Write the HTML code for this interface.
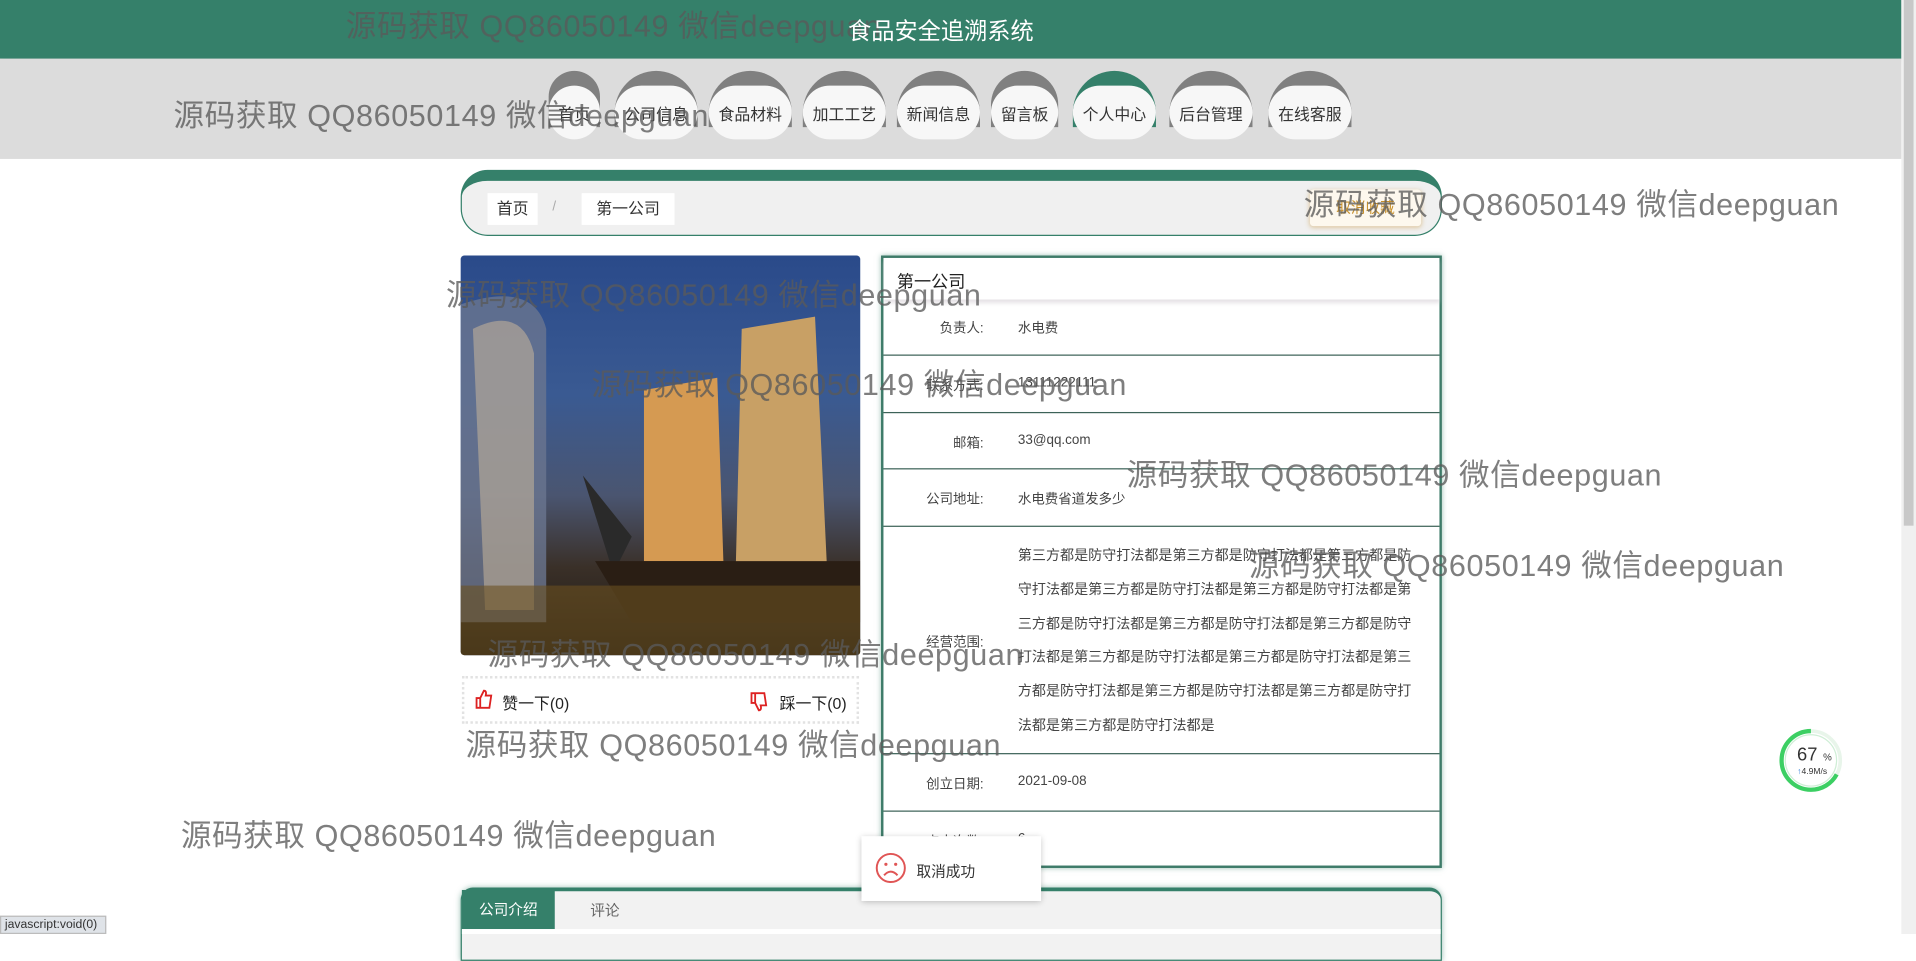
<!DOCTYPE html>
<html><head><meta charset="utf-8">
<style>
*{margin:0;padding:0;box-sizing:border-box}
html,body{width:1916px;height:934px;overflow:hidden;background:#fff;font-family:"Liberation Sans","Noto Sans CJK SC",sans-serif}
#s{position:absolute;left:0;top:0;width:1568px;height:764px;transform:scale(1.22194,1.2225);transform-origin:0 0}
.a{position:absolute}
.hdr{left:0;top:0;width:1556px;height:48px;background:#35806a;box-shadow:0 2px 4px rgba(0,0,0,.3)}
.title{left:0;width:1540px;top:11px;text-align:center;color:#fff;font-size:19px;z-index:5}
.nav{left:0;top:48px;width:1556px;height:82px;background:#dcdcdc}
.ni{position:absolute;top:58px;height:56px}
.ni .t{position:absolute;left:0;right:0;top:0;height:46px;border-radius:34px 34px 0 0;background:#808080}
.ni .w{position:absolute;left:0;right:0;top:12px;bottom:0;border-radius:24px;background:#f7f7f7;font-size:13px;color:#333;text-align:center;line-height:48px}
.bc{left:377px;top:139px;width:803px;height:54px;border:1px solid #35806a;border-top:9px solid #35806a;border-radius:22px;background:#f0f0f0}
.bi{position:absolute;top:158px;height:26px;background:#fff;font-size:13px;color:#333;line-height:26px;text-align:center}
.info{left:721px;top:209px;width:459px;height:501px;border:2px solid #3e7b69;box-shadow:0 0 4px rgba(53,128,106,.5);background:#fff}
.row{position:absolute;left:0;right:0;border-top:1px solid #3d6358;font-size:11px;color:#444}
.row .l{position:absolute;right:373px;text-align:right}
.row .v{position:absolute;left:110px}
.wm{position:absolute;font-size:25px;color:rgba(90,90,90,.78);white-space:nowrap;letter-spacing:0.5px}
</style></head><body><div id="s">
<div class="a hdr"></div>
<div class="a nav"></div>
<div class="ni" style="left:449px;width:42px"><div class="t"></div><div class="w">首页</div></div>
<div class="ni" style="left:503px;width:68px"><div class="t"></div><div class="w">公司信息</div></div>
<div class="ni" style="left:580px;width:68px"><div class="t"></div><div class="w">食品材料</div></div>
<div class="ni" style="left:657px;width:68px"><div class="t"></div><div class="w">加工工艺</div></div>
<div class="ni" style="left:734px;width:68px"><div class="t"></div><div class="w">新闻信息</div></div>
<div class="ni" style="left:811px;width:55px"><div class="t"></div><div class="w">留言板</div></div>
<div class="ni" style="left:878px;width:68px"><div class="t" style="background:#35806a"></div><div class="w">个人中心</div></div>
<div class="ni" style="left:957px;width:68px"><div class="t"></div><div class="w">后台管理</div></div>
<div class="ni" style="left:1038px;width:68px"><div class="t"></div><div class="w">在线客服</div></div>

<div class="a bc"></div>
<div class="bi" style="left:399px;width:41px">首页</div>
<div class="a" style="left:452px;top:163px;font-size:11px;color:#aaa">/</div>
<div class="bi" style="left:476px;width:76px">第一公司</div>
<div class="a" style="left:1072px;top:155px;width:91px;height:30px;background:#fdf8ee;border-radius:3px;box-shadow:0 1px 4px rgba(200,150,60,.5);font-size:12px;color:#c8902a;line-height:30px;text-align:center">取消收藏</div>

<div class="a" style="left:377px;top:209px;width:327px;height:327px;border-radius:3px;overflow:hidden;background:linear-gradient(180deg,#2a4a8a 0%,#3a5a92 35%,#4a5570 60%,#3a3028 78%,#1a1612 100%)">
<svg width="327" height="327" style="position:absolute;left:0;top:0">
<path d="M0 40 Q60 20 70 60 L70 300 L0 300Z" fill="#6a7590" opacity=".8"/>
<path d="M10 60 Q50 40 60 80 L60 290 L20 290Z" fill="#c9b79a" opacity=".55"/>
<path d="M150 110 L210 100 L215 250 L150 250Z" fill="#d59a52"/>
<path d="M230 60 L290 50 L300 260 L225 260Z" fill="#c8a065"/>
<path d="M100 180 L140 230 L125 260Z" fill="#2a2a2a"/>
<path d="M110 250 L327 250 L327 300 L140 300Z" fill="#2a1e14"/>
<rect x="0" y="270" width="327" height="57" fill="#6a5020" opacity=".6"/>
</svg></div>
<div class="a" style="left:378px;top:553px;width:325px;height:39px;border:2px dotted #e2e2e2"></div>
<svg class="a" style="left:388px;top:564px" width="16" height="16" viewBox="0 0 16 16"><path d="M2 7h3v8H2zM5 7l3-6c2 0 2 2 1.5 4H14l-1.5 10H5" fill="none" stroke="#d22" stroke-width="1.5"/></svg>
<div class="a" style="left:411px;top:565px;font-size:13px;color:#222">赞一下(0)</div>
<svg class="a" style="left:613px;top:566px" width="16" height="16" viewBox="0 0 16 16"><path d="M2 1h3v8H2zM5 9l3 6c2 0 2-2 1.5-4H14L12.5 1H5" fill="none" stroke="#d22" stroke-width="1.5"/></svg>
<div class="a" style="left:638px;top:565px;font-size:13px;color:#222">踩一下(0)</div>

<div class="a info">
<div class="a" style="left:0;right:0;top:0;height:34px;box-shadow:0 3px 3px rgba(200,190,200,.45)"></div>
<div class="a" style="left:11px;top:9px;font-size:14px;color:#222">第一公司</div>
<div class="row" style="top:49px;border:none"><span class="l">负责人:</span><span class="v">水电费</span></div>
<div class="row" style="top:79px;height:47px"><span class="l" style="top:16px">联系方式:</span><span class="v" style="top:16px">13111222111</span></div>
<div class="row" style="top:126px;height:47px"><span class="l" style="top:16px">邮箱:</span><span class="v" style="top:16px">33@qq.com</span></div>
<div class="row" style="top:172px;height:47px"><span class="l" style="top:16px">公司地址:</span><span class="v" style="top:16px">水电费省道发多少</span></div>
<div class="row" style="top:219px;height:186px"><span class="l" style="top:86px">经营范围:</span><span class="v" style="top:11px;width:326px;line-height:27.8px;font-size:11.5px;word-break:break-all">第三方都是防守打法都是第三方都是防守打法都是第三方都是防守打法都是第三方都是防守打法都是第三方都是防守打法都是第三方都是防守打法都是第三方都是防守打法都是第三方都是防守打法都是第三方都是防守打法都是第三方都是防守打法都是第三方都是防守打法都是第三方都是防守打法都是第三方都是防守打法都是第三方都是防守打法都是</span></div>
<div class="row" style="top:405px;height:47px"><span class="l" style="top:16px">创立日期:</span><span class="v" style="top:16px">2021-09-08</span></div>
<div class="row" style="top:452px;height:47px"><span class="l" style="top:16px">点击次数:</span><span class="v" style="top:16px">6</span></div>
</div>

<div class="a" style="left:377px;top:726px;width:803px;height:60px;border:1px solid #35806a;border-top:3px solid #35806a;border-radius:10px 10px 0 0;background:#f2f2f2;box-shadow:0 0 5px rgba(53,128,106,.5)"></div>
<div class="a" style="left:378px;top:728px;width:76px;height:32px;background:#35806a;color:#fff;font-size:12px;line-height:32px;text-align:center">公司介绍</div>
<div class="a" style="left:483px;top:736px;font-size:12px;color:#666">评论</div>
<div class="a" style="left:378px;top:760px;width:801px;height:4px;background:#fff"></div>

<div class="a" style="left:705px;top:684px;width:147px;height:53px;background:#fff;box-shadow:0 1px 5px rgba(0,0,0,.25)"></div>
<svg class="a" style="left:716px;top:696px" width="26" height="28" viewBox="0 0 26 28"><circle cx="13" cy="14" r="11.5" fill="none" stroke="#e05555" stroke-width="1.6"/><circle cx="9" cy="11" r="1.3" fill="#e05555"/><circle cx="17" cy="11" r="1.3" fill="#e05555"/><path d="M7.5 20 Q13 14 18.5 20" fill="none" stroke="#e05555" stroke-width="1.6"/></svg>
<div class="a" style="left:750px;top:704px;font-size:12px;color:#333">取消成功</div>

<div class="a" style="left:1556px;top:0;width:12px;height:764px;background:#f0f0f0"></div>
<div class="a" style="left:1558px;top:0;width:8px;height:430px;background:#c8c8c8"></div>

<svg class="a" style="left:1455px;top:595px" width="54" height="54" viewBox="0 0 54 54"><circle cx="27" cy="27" r="24" fill="#fff" stroke="#e8f5ea" stroke-width="3"/><circle cx="27" cy="27" r="24" fill="none" stroke="#3ccf63" stroke-width="3.5" stroke-dasharray="101 151" transform="rotate(-90 27 27) scale(1,-1) translate(0,-54)"/><circle cx="27" cy="27" r="21" fill="none" stroke="#cfeed6" stroke-width="1"/><text x="24" y="27" font-size="15" fill="#333" text-anchor="middle" font-family="Liberation Sans">67</text><text x="37" y="27" font-size="8" fill="#333" font-family="Liberation Sans">%</text><text x="28" y="38" font-size="7" fill="#333" text-anchor="middle" font-family="Liberation Sans"><tspan fill="#2a7bd5">↑</tspan>4.9M/s</text></svg>

<div class="a" style="left:0;top:749px;width:87px;height:15px;background:#dfe3e8;border:1px solid #bbb;font-size:10px;color:#333;line-height:13px;padding-left:3px">javascript:void(0)</div>

<div class="wm" style="left:283px;top:2px">源码获取 QQ86050149 微信deepguan</div>
<div class="wm" style="left:142px;top:75px">源码获取 QQ86050149 微信deepguan</div>
<div class="wm" style="left:1067px;top:148px">源码获取 QQ86050149 微信deepguan</div>
<div class="wm" style="left:365px;top:222px">源码获取 QQ86050149 微信deepguan</div>
<div class="wm" style="left:484px;top:295px">源码获取 QQ86050149 微信deepguan</div>
<div class="wm" style="left:922px;top:369px">源码获取 QQ86050149 微信deepguan</div>
<div class="wm" style="left:1022px;top:443px">源码获取 QQ86050149 微信deepguan</div>
<div class="wm" style="left:399px;top:516px">源码获取 QQ86050149 微信deepguan</div>
<div class="wm" style="left:381px;top:590px">源码获取 QQ86050149 微信deepguan</div>
<div class="wm" style="left:148px;top:664px">源码获取 QQ86050149 微信deepguan</div>
<div class="a title">食品安全追溯系统</div>
</div></body></html>
